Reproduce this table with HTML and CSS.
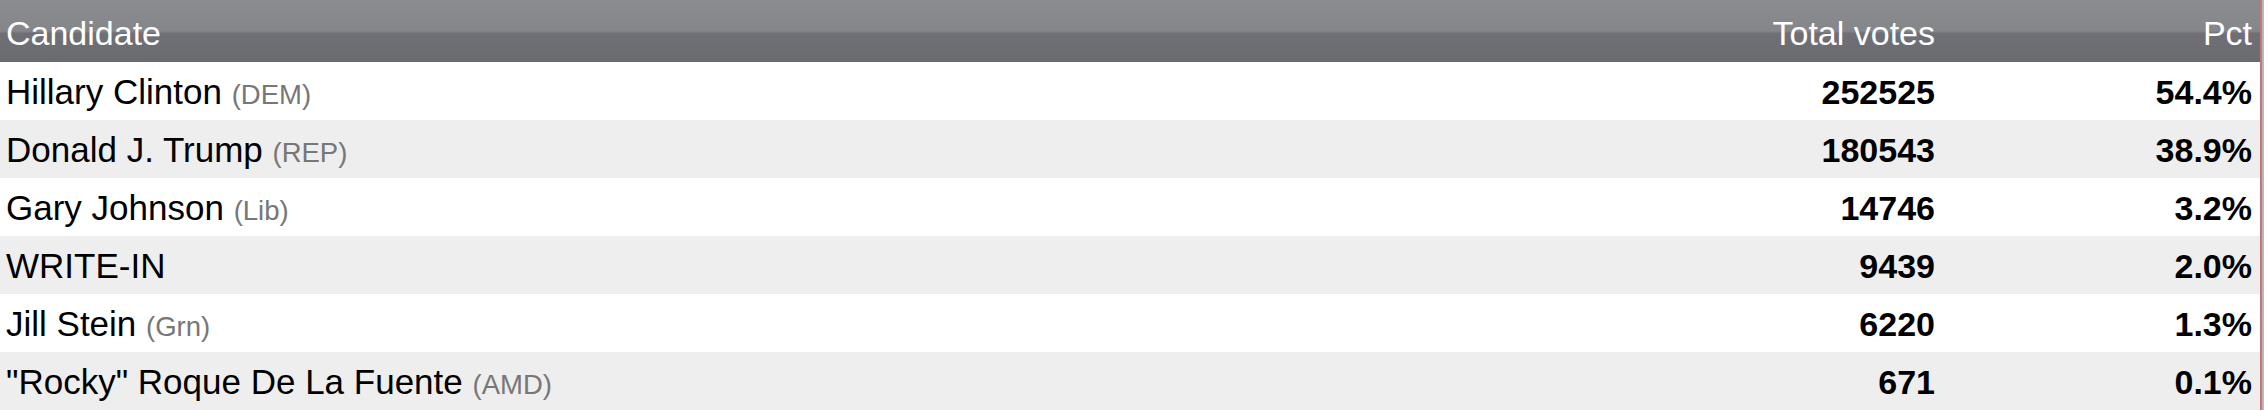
FILE: index.html
```html
<!DOCTYPE html>
<html>
<head>
<meta charset="utf-8">
<link rel="stylesheet" href="styles.css">
</head>
<body>
<div class="frame">
<table class="results">
  <colgroup>
    <col class="c-name">
    <col class="c-votes">
    <col class="c-pct">
  </colgroup>
  <thead>
    <tr class="head">
      <th class="name">Candidate</th>
      <th class="num">Total votes</th>
      <th class="num pct">Pct</th>
    </tr>
  </thead>
  <tbody>
    <tr class="row"><td class="name">Hillary Clinton <span class="party">(DEM)</span></td><td class="num">252525</td><td class="num pct">54.4%</td></tr>
    <tr class="row alt"><td class="name">Donald J. Trump <span class="party">(REP)</span></td><td class="num">180543</td><td class="num pct">38.9%</td></tr>
    <tr class="row"><td class="name">Gary Johnson <span class="party">(Lib)</span></td><td class="num">14746</td><td class="num pct">3.2%</td></tr>
    <tr class="row alt"><td class="name">WRITE-IN</td><td class="num">9439</td><td class="num pct">2.0%</td></tr>
    <tr class="row"><td class="name">Jill Stein <span class="party">(Grn)</span></td><td class="num">6220</td><td class="num pct">1.3%</td></tr>
    <tr class="row alt"><td class="name">"Rocky" Roque De La Fuente <span class="party">(AMD)</span></td><td class="num">671</td><td class="num pct">0.1%</td></tr>
  </tbody>
</table>
</div>
</body>
</html>
```
FILE: styles.css
```css
html, body {
  margin: 0;
  padding: 0;
  background: #b9b9bb;
}
.frame {
  width: 2260px;
  border-right: 2px solid #c9737a;
  background: #ffffff;
}
.results {
  width: 2260px;
  border-collapse: collapse;
  table-layout: fixed;
  font-family: "Liberation Sans", Arial, Helvetica, sans-serif;
}
.c-votes { width: 400px; }
.c-pct { width: 317px; }
.head th {
  height: 62px;
  padding: 4px 0 0 0;
  box-sizing: border-box;
  font-weight: normal;
  font-size: 34px;
  color: #ffffff;
  background: linear-gradient(#8b8c90 0%, #85868a 50%, #6f7075 54%, #6a6b70 100%);
  vertical-align: middle;
}
.row td {
  height: 58px;
  padding: 2px 0 0 0;
  box-sizing: border-box;
  vertical-align: middle;
  background: #ffffff;
}
.row.alt td {
  background: #eeeeee;
}
.name {
  text-align: left;
  padding-left: 6px !important;
  font-size: 35px;
  color: #000000;
  white-space: nowrap;
}
.head th.name {
  font-size: 34px;
  color: #ffffff;
}
.party {
  font-size: 27.5px;
  color: #777777;
}
.num {
  text-align: right;
  padding-right: 8px !important;
}
.row .num {
  font-size: 34px;
  font-weight: bold;
  color: #000000;
}
.num.pct {
  padding-right: 8px !important;
}
```
